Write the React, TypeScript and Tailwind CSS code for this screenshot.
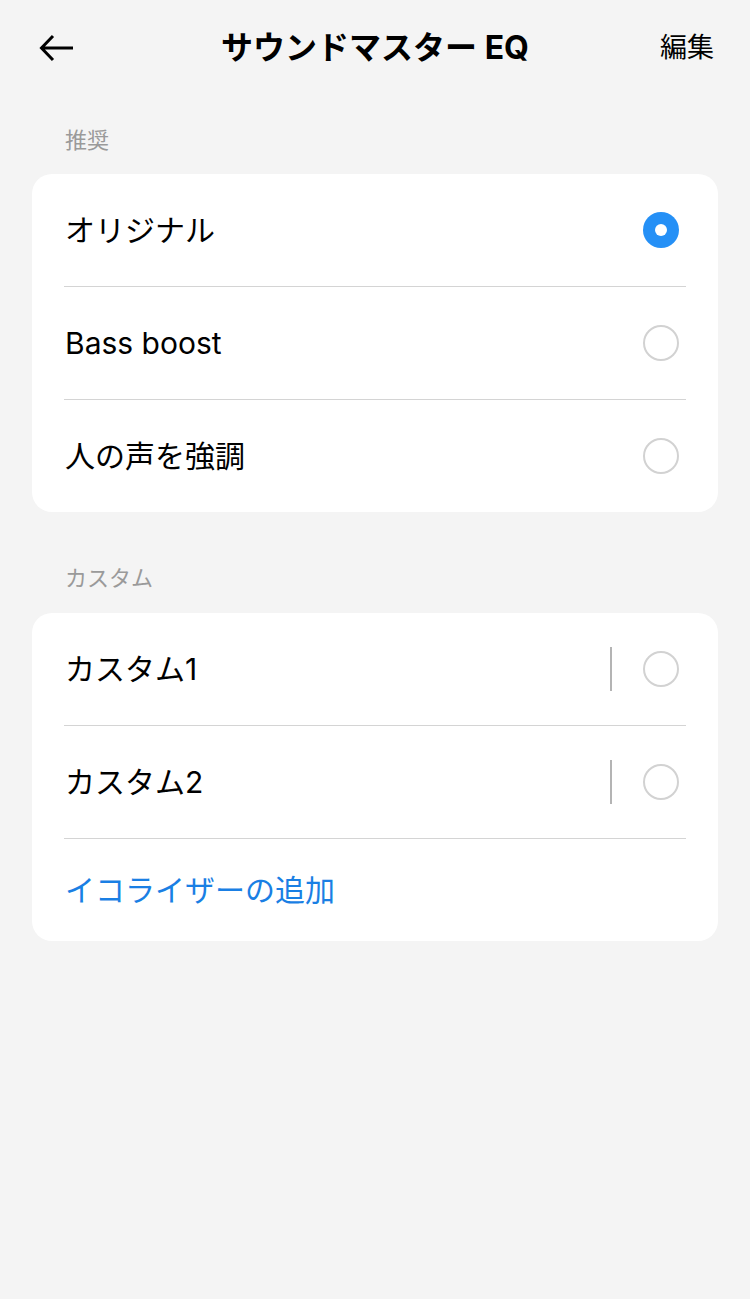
import { FC } from "react";

interface IRow {
    label: string;
    selected?: boolean;
    custom?: boolean;
}

const recommended: IRow[] = [
    { label: "オリジナル", selected: true },
    { label: "Bass boost" },
    { label: "人の声を強調" },
];

const customs: IRow[] = [
    { label: "カスタム1", custom: true },
    { label: "カスタム2", custom: true },
];

const Radio: FC<{ selected?: boolean }> = ({ selected }) =>
    selected ? (
        <span className="w-[36px] h-[36px] rounded-full bg-[#2590f6] flex items-center justify-center">
            <span className="w-[12px] h-[12px] rounded-full bg-white" />
        </span>
    ) : (
        <span className="w-[36px] h-[36px] rounded-full border-2 border-[#d2d2d2]" />
    );

const Row: FC<{ row: IRow }> = ({ row }) => (
    <div className="h-[112px] flex items-center justify-between pl-[33px] pr-[39px]">
        <span className="text-[30px] text-black">{row.label}</span>
        <div className="flex items-center">
            {row.custom && <span className="w-[2px] h-[44px] bg-[#b4b4b4] mr-[31px]" />}
            <Radio selected={row.selected} />
        </div>
    </div>
);

const Divider = () => <div className="mx-[32px] h-px bg-[#d4d4d4]" />;

const App: FC = () => {
    return (
        <div
            className="min-h-[1299px] w-full bg-[#f4f4f4]"
            style={{ fontFamily: 'Inter, "Noto Sans CJK JP", sans-serif' }}
        >
            <header className="h-[96px] flex items-center justify-between pl-[39px] pr-[36px] relative">
                <svg width="35" height="28" viewBox="0 0 35 28" fill="none" stroke="black" strokeWidth="3">
                    <path d="M34 14H3M14 2L2.5 14L14 26" />
                </svg>
                <h1 className="absolute left-0 right-0 text-center text-[32px] font-bold text-black pointer-events-none">
                    サウンドマスター EQ
                </h1>
                <span className="text-[27px] text-black">編集</span>
            </header>

            <div className="pl-[65px] pt-[29px] pb-[19px] text-[22px] leading-[30px] text-[#9a9a9a]">推奨</div>
            <div className="mx-[32px] bg-white rounded-[20px]">
                {recommended.map((row, index) => (
                    <div key={index}>
                        {index > 0 && <Divider />}
                        <Row row={row} />
                    </div>
                ))}
            </div>

            <div className="pl-[65px] pt-[51px] pb-[20px] text-[22px] leading-[30px] text-[#9a9a9a]">カスタム</div>
            <div className="mx-[32px] bg-white rounded-[20px]">
                {customs.map((row, index) => (
                    <div key={index}>
                        {index > 0 && <Divider />}
                        <Row row={row} />
                    </div>
                ))}
                <Divider />
                <div className="h-[102px] flex items-center pl-[33px]">
                    <span className="text-[30px] text-[#1a7fe4]">イコライザーの追加</span>
                </div>
            </div>
        </div>
    );
};

export default App;
